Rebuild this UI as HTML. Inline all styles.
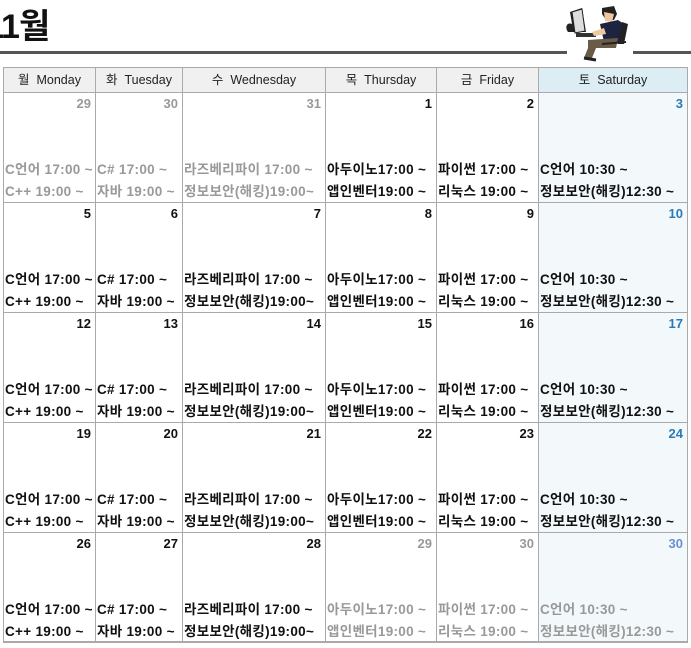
<!DOCTYPE html>
<html><head><meta charset="utf-8"><style>
body{margin:0;width:691px;height:648px;background:#fff;position:relative;overflow:hidden;font-family:"Liberation Sans","Noto Sans CJK KR","NanumGothic",sans-serif}
.t{position:absolute;left:-15px;top:5px;font-size:34px;line-height:44px;font-weight:bold;color:#111;letter-spacing:-1px}
.hl{position:absolute;top:51px;height:3px;background:#555}
.c{position:absolute;box-sizing:border-box;border-right:1px solid #aaa;border-bottom:1px solid #aaa}
.h{background:#f0f0f0;text-align:center;font-size:12.5px;line-height:24px;color:#222}
.sat{background:#f3f9fb}
.hs{background:#dcedf4}
.n{position:absolute;right:4px;top:3px;font-size:13px;line-height:16px;font-weight:bold;color:#111}
.l{position:absolute;left:1px;font-size:13.5px;line-height:16px;height:16px;font-weight:bold;color:#111;white-space:nowrap;letter-spacing:0.3px}
.g .l,.g .n{color:#999}
.sat .n{color:#2a7ab8}
.g.sat .n{color:#6a8fd0}
</style></head><body>
<div class="t">11월</div>
<div class="hl" style="left:0;width:567px"></div>
<div class="hl" style="left:633px;width:58px"></div>
<svg style="position:absolute;left:562px;top:2px" width="72" height="60" viewBox="0 0 72 60">
<path d="M6 30 C2 24 6 20 10 22 L8 10 L20 6 L24 30 Z" fill="#222"/>
<path d="M10 10 L20 7 L23 29 L13 31 Z" fill="#ddd" stroke="#222"/>
<rect x="14" y="31" width="20" height="4" fill="#333"/>
<path d="M40 6 L52 4 L55 12 L52 18 L44 18 L40 12 Z" fill="#222"/>
<path d="M42 10 L52 12 L50 20 L43 19 Z" fill="#f0c8a0"/>
<path d="M38 22 L56 18 L62 22 L60 40 L42 40 Z" fill="#1c2440"/>
<path d="M60 20 L66 22 L62 42 L56 42 Z" fill="#222"/>
<path d="M30 30 L42 26 L44 32 L32 34 Z" fill="#f0c8a0"/>
<path d="M26 38 L56 36 L54 46 L34 46 L30 56 L22 56 L26 46 Z" fill="#6a5a48"/>
<path d="M22 56 L34 58" stroke="#222" stroke-width="3"/>
<path d="M40 42 L64 40" stroke="#222" stroke-width="2"/>
</svg>
<div id="g"></div>
<script>
var X=[3,96,183,326,437,539,688],H=['월&nbsp; Monday','화&nbsp; Tuesday','수&nbsp; Wednesday','목&nbsp; Thursday','금&nbsp; Friday','토&nbsp; Saturday'];
var L=[['C언어 17:00 ~','C++ 19:00 ~'],['C# 17:00 ~','자바 19:00 ~'],['라즈베리파이 17:00 ~','정보보안(해킹)19:00~'],['아두이노17:00 ~','앱인벤터19:00 ~'],['파이썬 17:00 ~','리눅스 19:00 ~'],['C언어 10:30 ~','정보보안(해킹)12:30 ~']];
var D=[[29,30,31,1,2,3],[5,6,7,8,9,10],[12,13,14,15,16,17],[19,20,21,22,23,24],[26,27,28,29,30,30]];
var s='';
for(var i=0;i<6;i++){var w=X[i+1]-X[i];s+='<div class="c h'+(i==5?' hs':'')+'" style="left:'+X[i]+'px;top:67px;width:'+w+'px;height:26px;border-top:1px solid #aaa;'+(i==0?'border-left:1px solid #aaa;':'')+'">'+H[i]+'</div>';}
for(var r=0;r<5;r++)for(var i=0;i<6;i++){var w=X[i+1]-X[i],g=(r==0&&i<3)||(r==4&&i>2);
s+='<div class="c'+(i==5?' sat':'')+(g?' g':'')+'" style="left:'+X[i]+'px;top:'+(93+r*110)+'px;width:'+w+'px;height:110px;'+(i==0?'border-left:1px solid #aaa;':'')+(r==4?'border-bottom:2px solid #aaa;':'')+'"><div class="n">'+D[r][i]+'</div><div class="l" style="top:69px">'+L[i][0]+'</div><div class="l" style="top:91px">'+L[i][1]+'</div></div>';}
document.getElementById('g').innerHTML=s;
</script>
</body></html>
